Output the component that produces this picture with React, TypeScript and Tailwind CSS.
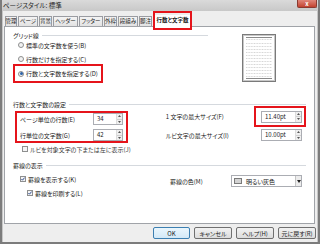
import React from "react";

function Radio({ checked, label }: { checked?: boolean; label: string }) {
  return (
    <div className="flex items-center gap-[2px] h-[8px]">
      <span className="w-[6px] h-[6px] rounded-full border border-[#8e8f8f] bg-[#f2f2f2] flex items-center justify-center">
        {checked && <span className="w-[3px] h-[3px] rounded-full bg-[#2b62a8]" />}
      </span>
      <span>{label}</span>
    </div>
  );
}

function Check({ checked, label }: { checked?: boolean; label: string }) {
  return (
    <div className="flex items-center gap-[2px] h-[8px]">
      <span className="w-[6px] h-[6px] border border-[#8e8f8f] bg-[#f4f4f4] flex items-center justify-center">
        {checked && (
          <svg width="4" height="4" viewBox="0 0 4 4">
            <path d="M0.4 2 L1.5 3.2 L3.6 0.6" fill="none" stroke="#1f3f8a" strokeWidth="0.9" />
          </svg>
        )}
      </span>
      <span>{label}</span>
    </div>
  );
}

function Spin({ value, className }: { value: string; className: string }) {
  return (
    <div className={`flex h-[12px] border border-[#abadb3] bg-white ${className}`}>
      <span className="flex-1 pl-[3px] leading-[10px]">{value}</span>
      <span className="w-[6px] flex flex-col border-l border-[#dcdcdc]">
        <span className="flex-1 flex items-center justify-center bg-[#efefef] border-b border-[#d0d0d0]">
          <svg width="3" height="2" viewBox="0 0 3 2">
            <path d="M0 2 L1.5 0 L3 2 Z" fill="#555" />
          </svg>
        </span>
        <span className="flex-1 flex items-center justify-center bg-[#efefef]">
          <svg width="3" height="2" viewBox="0 0 3 2">
            <path d="M0 0 L1.5 2 L3 0 Z" fill="#555" />
          </svg>
        </span>
      </span>
    </div>
  );
}

function Group({ label, className = "" }: { label: string; className?: string }) {
  return (
    <div className={`flex items-center gap-[3px] h-[8px] ${className}`}>
      <span className="whitespace-nowrap">{label}</span>
      <span className="flex-1 h-px bg-[#d5d9de]" />
    </div>
  );
}

function Preview() {
  const rows = [5, 9, 12, 15, 18, 21, 24, 27, 30, 33, 36, 39, 42];
  return (
    <svg width="34" height="48" viewBox="0 0 34 48" className="ml-[34px] mt-[3px]">
      <rect x="0.5" y="0.5" width="33" height="47" fill="#fff" stroke="#7a7a7a" />
      <rect x="1.5" y="1.5" width="31" height="45" fill="none" stroke="#c8c8c8" />
      <line x1="4" y1="3.5" x2="30" y2="3.5" stroke="#8a8a8a" />
      <line x1="4" y1="44.5" x2="30" y2="44.5" stroke="#8a8a8a" />
      {rows.map((y) => (
        <line key={y} x1="4" y1={y + 0.5} x2="30" y2={y + 0.5} stroke="#d6d6d6" strokeDasharray="1 0.6" />
      ))}
    </svg>
  );
}

const tabs: [string, string][] = [
  ["管理", "w-[12px]"],
  ["ページ", "w-[20px]"],
  ["背景", "w-[13px]"],
  ["ヘッダー", "w-[25px]"],
  ["フッター", "w-[24px]"],
  ["外枠", "w-[13px]"],
  ["段組み", "w-[20px]"],
  ["脚注", "w-[13px]"],
];

export default function App() {
  return (
    <div className="w-[320px] h-[244px] bg-[#c6c6c6] border-x-2 border-b-2 border-[#7c7c7c] flex flex-col overflow-hidden font-['Noto_Sans_CJK_JP',sans-serif] [font-feature-settings:'palt'] text-[6px] text-[#1b1b1b]">
      <div className="h-[11px] flex items-start justify-between bg-gradient-to-b from-[#dadada] to-[#c8c8c8]">
        <span className="pl-[1px] text-[6.5px] leading-[10px] text-[#2a2a2a]">ページスタイル: 標準</span>
        <span className="w-[20px] h-[8px] mr-[1px] rounded-b-[2px] bg-gradient-to-b from-[#e0867a] to-[#c2412e] border border-[#8a3a30] border-t-0 flex items-center justify-center text-white text-[6px] leading-none font-bold">
          x
        </span>
      </div>

      <div className="flex-1 mx-px bg-[#eeeeee] flex flex-col">
        <div className="h-[15px] flex items-end pl-[2px] gap-px">
          {tabs.map(([t, w]) => (
            <div
              key={t}
              className={`${w} h-[10px] border border-b-0 border-[#9a9ca2] bg-gradient-to-b from-[#f4f4f4] to-[#e2e2e2] flex items-center justify-center whitespace-nowrap text-[5.5px] leading-none`}
            >
              {t}
            </div>
          ))}
          <div className="relative z-10 -mb-[4px] w-[39px] h-[19px] border-2 border-[#e5141b] flex items-start">
            <div className="w-full h-[12px] mt-[2px] bg-white flex items-center justify-center whitespace-nowrap text-[5.5px] leading-none font-bold">
              行数と文字数
            </div>
          </div>
        </div>

        <div className="ml-px w-[311px] h-[198px] border border-[#a0a3a8] bg-white pt-[4px] pl-[8px] pr-[8px] flex flex-col">
          <div className="flex h-[52px]">
            <div className="w-[195px] flex flex-col">
              <Group label="グリッド線" />
              <div className="ml-[5px] mt-[2px]">
                <Radio label="標準の文字数を使う(B)" />
              </div>
              <div className="ml-[5px] mt-[6px]">
                <Radio label="行数だけを指定する(C)" />
              </div>
              <div className="mt-[1px] w-[90px] h-[19px] border-2 border-[#e5141b] pl-[3px] flex items-center">
                <Radio checked label="行数と文字数を指定する(D)" />
              </div>
            </div>
            <Preview />
          </div>

          <Group label="行数と文字数の設定" className="mt-[17px]" />
          <div className="flex mt-[3px]">
            <div className="flex flex-col">
              <div className="ml-[2px] w-[113px] h-[32px] border-2 border-[#e5141b] pl-[3px] pr-[3px] flex flex-col gap-[4px]">
                <div className="h-[12px] flex items-center justify-between">
                  <span>ページ単位の行数(E)</span>
                  <Spin value="34" className="w-[30px]" />
                </div>
                <div className="h-[12px] flex items-center justify-between">
                  <span>行単位の文字数(G)</span>
                  <Spin value="42" className="w-[30px]" />
                </div>
              </div>
              <div className="ml-[9px] mt-[2px] text-[#3a3a3a]">
                <Check label="ルビを対象文字の下または左に表示(J)" />
              </div>
            </div>
            <div className="ml-[35px] -mt-[5px] flex-1 flex flex-col">
              <div className="h-[21px] flex items-center">
                <span>1 文字の最大サイズ(F)</span>
                <div className="ml-auto w-[52px] h-[21px] border-2 border-[#e5141b] pl-[5px] pr-[2px] flex items-center">
                  <Spin value="11.40pt" className="w-[41px]" />
                </div>
              </div>
              <div className="mt-[2px] h-[12px] flex items-center">
                <span>ルビ文字の最大サイズ(I)</span>
                <Spin value="10.00pt" className="ml-auto mr-[4px] w-[41px]" />
              </div>
            </div>
          </div>

          <Group label="罫線の表示" className="mt-[8px]" />
          <div className="flex mt-[6px] h-[12px]">
            <div className="w-[150px] ml-[7px]">
              <Check checked label="罫線を表示する(K)" />
            </div>
            <div className="flex-1 flex items-center">
              <span>罫線の色(M)</span>
              <div className="ml-auto mr-[4px] w-[71px] h-[12px] border border-[#abadb3] bg-white flex items-center pl-[2px]">
                <span className="w-[8px] h-[6px] border border-[#7a7a7a] bg-[#d3d3d3]" />
                <span className="ml-[4px] flex-1">明るい灰色</span>
                <span className="w-[6px] h-[10px] border-l border-[#c4c4c4] bg-[#ececec] flex items-center justify-center">
                  <svg width="4" height="3" viewBox="0 0 4 3">
                    <path d="M0 0 L2 3 L4 0 Z" fill="#222" />
                  </svg>
                </span>
              </div>
            </div>
          </div>
          <div className="ml-[14px] mt-[2px]">
            <Check checked label="罫線を印刷する(L)" />
          </div>
        </div>

        <div className="mt-[3px] flex justify-end gap-[4px] pr-px">
          <div className="w-[37px] h-[12px] rounded-[2px] border border-[#3c7fb1] bg-gradient-to-b from-[#eaf6fd] to-[#d3e9f7] flex items-center justify-center">
            OK
          </div>
          <div className="w-[38px] h-[12px] rounded-[2px] border border-[#707070] bg-gradient-to-b from-[#f2f2f2] to-[#dcdcdc] flex items-center justify-center">
            キャンセル
          </div>
          <div className="w-[38px] h-[12px] rounded-[2px] border border-[#707070] bg-gradient-to-b from-[#f2f2f2] to-[#dcdcdc] flex items-center justify-center">
            ヘルプ(H)
          </div>
          <div className="w-[38px] h-[12px] rounded-[2px] border border-[#707070] bg-gradient-to-b from-[#f2f2f2] to-[#dcdcdc] flex items-center justify-center">
            元に戻す(R)
          </div>
        </div>
      </div>
    </div>
  );
}
